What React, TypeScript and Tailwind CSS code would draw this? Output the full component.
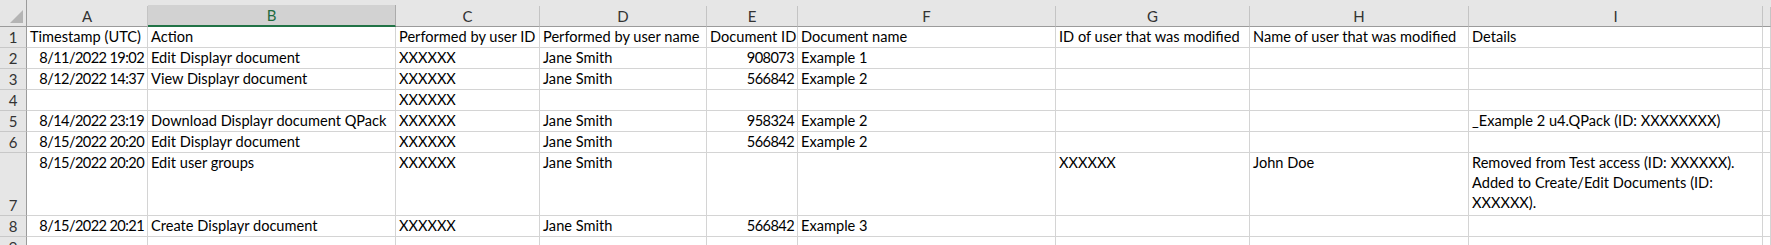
import React from 'react';

const columns = ['A', 'B', 'C', 'D', 'E', 'F', 'G', 'H', 'I', ''];

type Row = { n: number; cells: (string | string[])[]; tall?: boolean };

const rows: Row[] = [
  {
    n: 1,
    cells: [
      'Timestamp (UTC)',
      'Action',
      'Performed by user ID',
      'Performed by user name',
      'Document ID',
      'Document name',
      'ID of user that was modified',
      'Name of user that was modified',
      'Details',
    ],
  },
  { n: 2, cells: ['8/11/2022 19:02', 'Edit Displayr document', 'XXXXXX', 'Jane Smith', '908073', 'Example 1'] },
  { n: 3, cells: ['8/12/2022 14:37', 'View Displayr document', 'XXXXXX', 'Jane Smith', '566842', 'Example 2'] },
  { n: 4, cells: ['', '', 'XXXXXX'] },
  {
    n: 5,
    cells: [
      '8/14/2022 23:19',
      'Download Displayr document QPack',
      'XXXXXX',
      'Jane Smith',
      '958324',
      'Example 2',
      '',
      '',
      '_Example 2 u4.QPack (ID: XXXXXXXX)',
    ],
  },
  { n: 6, cells: ['8/15/2022 20:20', 'Edit Displayr document', 'XXXXXX', 'Jane Smith', '566842', 'Example 2'] },
  {
    n: 7,
    tall: true,
    cells: [
      '8/15/2022 20:20',
      'Edit user groups',
      'XXXXXX',
      'Jane Smith',
      '',
      '',
      'XXXXXX',
      'John Doe',
      ['Removed from Test access (ID: XXXXXX).', 'Added to Create/Edit Documents (ID:', 'XXXXXX).'],
    ],
  },
  { n: 8, cells: ['8/15/2022 20:21', 'Create Displayr document', 'XXXXXX', 'Jane Smith', '566842', 'Example 3'] },
  { n: 9, cells: [] },
];

// columns A and E hold numbers/dates, right aligned below the title row
const isNumeric = (row: number, col: number) => row > 1 && (col === 0 || col === 4);

export default function App() {
  return (
    <div className="h-[245px] w-full overflow-hidden bg-white font-['Lato','Liberation_Sans',sans-serif] text-[14.6px] leading-[20px] text-black">
      <div className="grid grid-cols-[27px_121px_248px_144px_167px_91px_258px_194px_219px_294px_1fr]">
        {/* column header strip */}
        <div className="flex h-[27px] items-end justify-end border-r border-b border-[#9b9b9b] bg-[#e6e6e6] pr-[3px] pb-[3px]">
          <div className="h-0 w-0 border-b-[13px] border-l-[13px] border-b-[#b4b4b4] border-l-transparent" />
        </div>
        {columns.map((c) => (
          <div key={c || 'J'} className="flex h-[27px] flex-col bg-[#e6e6e6] text-[15px]">
            <div className="h-[7px]" />
            {c === 'B' ? (
              <div className="flex flex-1 items-center justify-center border-r border-b-2 border-r-[#ababab] border-b-[#217346] bg-[#d2d2d2] text-[#1e6b3f]">
                {c}
              </div>
            ) : (
              <div className="flex flex-1 items-center justify-center border-r border-b border-r-[#c4c4c4] border-b-[#9b9b9b] text-[#333]">
                {c}
              </div>
            )}
          </div>
        ))}

        {rows.map((r) => (
          <React.Fragment key={r.n}>
            <div
              className={`flex items-end justify-center border-r border-b border-r-[#9b9b9b] border-b-[#c8c8c8] bg-[#e6e6e6] text-[15px] text-[#333] ${
                r.tall ? 'h-[63px]' : 'h-[21px]'
              }`}
            >
              {r.n}
            </div>
            {columns.map((_, ci) => {
              const v = r.cells[ci] ?? '';
              return (
                <div
                  key={ci}
                  className={`overflow-hidden whitespace-nowrap border-r border-b border-[#d4d4d4] px-[3px] ${
                    r.tall ? 'h-[63px]' : 'h-[21px]'
                  } ${isNumeric(r.n, ci) ? 'text-right tracking-[-0.6px]' : 'text-left'}`}
                >
                  {Array.isArray(v) ? v.map((line) => <div key={line}>{line}</div>) : v}
                </div>
              );
            })}
          </React.Fragment>
        ))}
      </div>
    </div>
  );
}
